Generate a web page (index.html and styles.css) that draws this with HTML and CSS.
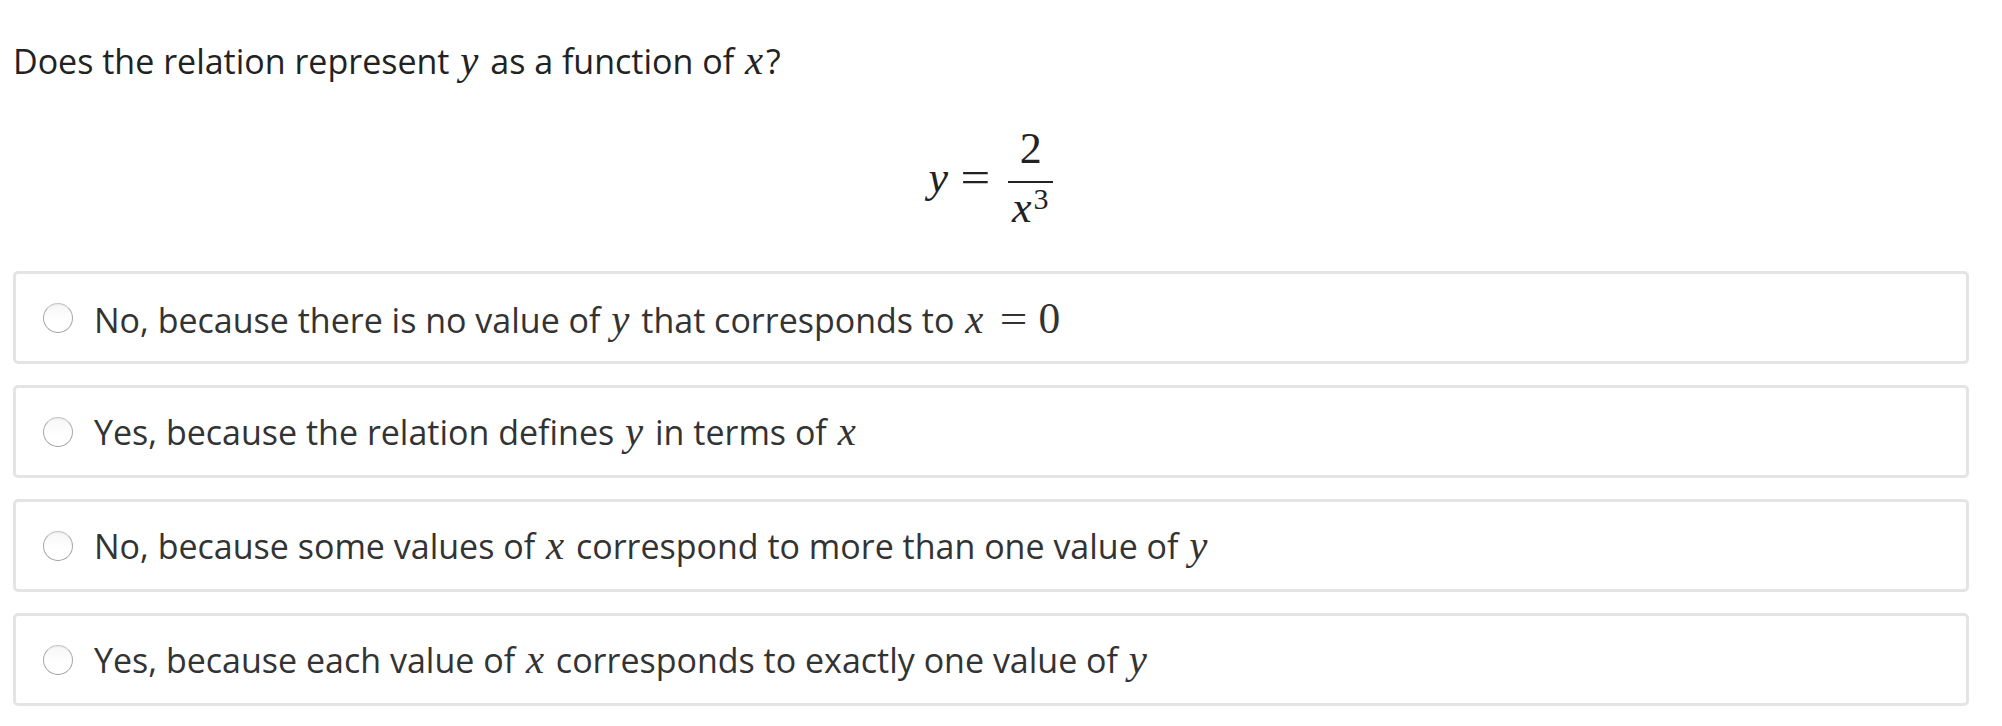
FILE: index.html
```html
<!DOCTYPE html>
<html>
<head>
<meta charset="utf-8">
<link rel="stylesheet" href="styles.css">
</head>
<body>
<div class="page">
  <p class="question">Does the relation represent <span class="mi">y</span> as a function of <span class="mi">x</span>?</p>
  <div class="formula">
    <span class="f-mi">y</span><span class="f-mo">=</span><span class="frac"><span class="num">2</span><span class="den"><span class="f-mi">x</span><sup class="sup">3</sup></span></span>
  </div>
  <div class="options">
    <label class="option"><span class="radio"></span><span class="text">No, because there is no value of <span class="mi">y</span> that corresponds to <span class="mi">x</span><span class="mo">=</span><span class="mn">0</span></span></label>
    <label class="option"><span class="radio"></span><span class="text">Yes, because the relation defines <span class="mi">y</span> in terms of <span class="mi">x</span></span></label>
    <label class="option"><span class="radio"></span><span class="text">No, because some values of <span class="mi">x</span> correspond to more than one value of <span class="mi">y</span></span></label>
    <label class="option"><span class="radio"></span><span class="text">Yes, because each value of <span class="mi">x</span> corresponds to exactly one value of <span class="mi">y</span></span></label>
  </div>
</div>
</body>
</html>
```

FILE: styles.css
```css
html, body {
  margin: 0;
  padding: 0;
  background: #ffffff;
}
.page {
  padding: 0 33px 0 13px;
  font-family: "Open Sans", "Noto Sans", sans-serif;
  color: #2b2b2b;
}
.question {
  margin: 0;
  padding-top: 39px;
  font-size: 34px;
  line-height: 44px;
  color: #222;
}
.mi {
  font-family: "Liberation Serif", "DejaVu Serif", serif;
  font-style: italic;
  font-size: 1.2em;
  padding: 0 3px 0 2px;
}
.mo, .mn {
  font-family: "Liberation Serif", "DejaVu Serif", serif;
  font-size: 1.2em;
}
.mn {
  font-size: 1.28em;
}
.mo {
  display: inline-block;
  margin: 0 13px 0 16px;
  transform: scaleX(1.2);
}
.formula {
  display: flex;
  justify-content: center;
  align-items: center;
  height: 108px;
  margin-top: 41px;
  font-family: "Liberation Serif", "DejaVu Serif", serif;
  font-size: 44px;
  line-height: 44px;
  color: #222;
}
.f-mi {
  font-style: italic;
}
.f-mo {
  display: inline-block;
  margin: 0 16px 0 15px;
  transform: scaleX(1.2);
}
.frac {
  display: inline-flex;
  flex-direction: column;
  align-items: center;
  margin-left: 4px;
}
.num {
  align-self: stretch;
  text-align: center;
  padding: 0 0 10px;
  border-bottom: 2px solid #222;
}
.den {
  padding: 3px 5px 0 4px;
}
.sup {
  font-size: 30px;
  vertical-align: 13px;
  line-height: 0;
  margin-left: 2px;
}
.options {
  display: flex;
  flex-direction: column;
  gap: 21px;
  margin-top: 39px;
}
.option {
  display: flex;
  align-items: center;
  height: 87px;
  border: 3px solid #e4e4e4;
  border-radius: 5px;
  padding-left: 27px;
  font-size: 34px;
  color: #333;
}
.radio {
  flex: none;
  width: 28px;
  height: 28px;
  border: 1px solid #a8a8a8;
  border-top-color: #c4c4c4;
  border-bottom-color: #9a9a9a;
  border-radius: 50%;
  background: linear-gradient(#f6f6f6, #ffffff 60%);
  box-shadow: inset 0 1px 1px rgba(0,0,0,0.06);
  margin-right: 21px;
}
.text {
  white-space: nowrap;
}
```
